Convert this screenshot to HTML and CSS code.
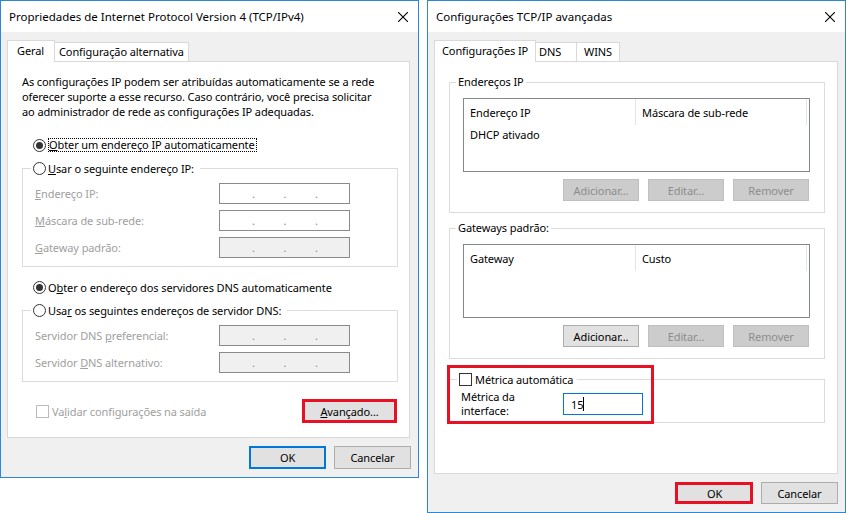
FILE: index.html
```html
<!DOCTYPE html>
<html lang="pt-BR">
<head>
    <meta charset="UTF-8">
    <meta name="viewport" content="width=device-width, initial-scale=1.0">
    <title>Propriedades TCP/IPv4</title>
    <link rel="stylesheet" href="styles.css">
</head>
<body>
<div class="desk">

    <!-- Janela: Propriedades IPv4 -->
    <div class="dialog dialog-ipv4">
        <div class="titlebar">
            <span class="title">Propriedades de Internet Protocol Version 4 (TCP/IPv4)</span>
            <svg class="close" width="10" height="10" viewBox="0 0 10 10"><path d="M0 0L10 10M10 0L0 10" stroke="#000" stroke-width="1.1"/></svg>
        </div>
        <div class="dialog-body">
            <div class="tabs">
                <div class="tab active tab-geral">Geral</div>
                <div class="tab tab-alt">Configuração alternativa</div>
            </div>
            <div class="panel panel-ipv4">
                <p class="desc">As configurações IP podem ser atribuídas automaticamente se a rede<br>oferecer suporte a esse recurso. Caso contrário, você precisa solicitar<br>ao administrador de rede as configurações IP adequadas.</p>

                <div class="option option-first"><span class="radio checked"></span><span class="focus"><u>O</u>bter um endereço IP automaticamente</span></div>

                <fieldset class="group group-ip">
                    <legend class="option"><span class="radio"></span><span><u>U</u>sar o seguinte endereço IP:</span></legend>
                    <div class="fields">
                        <div class="field"><span class="label"><u>E</u>ndereço IP:</span><span class="ip"><i>.</i><i>.</i><i>.</i></span></div>
                        <div class="field"><span class="label"><u>M</u>áscara de sub-rede:</span><span class="ip"><i>.</i><i>.</i><i>.</i></span></div>
                        <div class="field"><span class="label"><u>G</u>ateway padrão:</span><span class="ip off"><i>.</i><i>.</i><i>.</i></span></div>
                    </div>
                </fieldset>

                <div class="option option-dns"><span class="radio checked"></span><span>O<u>b</u>ter o endereço dos servidores DNS automaticamente</span></div>

                <fieldset class="group group-ip">
                    <legend class="option"><span class="radio"></span><span>Usa<u>r</u> os seguintes endereços de servidor DNS:</span></legend>
                    <div class="fields">
                        <div class="field"><span class="label">Servidor DNS <u>p</u>referencial:</span><span class="ip off"><i>.</i><i>.</i><i>.</i></span></div>
                        <div class="field"><span class="label">Servidor <u>D</u>NS alternativo:</span><span class="ip off"><i>.</i><i>.</i><i>.</i></span></div>
                    </div>
                </fieldset>

                <div class="panel-foot">
                    <div class="check-row disabled"><span class="checkbox"></span><span>Va<u>l</u>idar configurações na saída</span></div>
                    <button class="btn btn-advanced marked"><u>A</u>vançado...</button>
                </div>
            </div>
            <div class="dialog-buttons">
                <button class="btn btn-default">OK</button>
                <button class="btn">Cancelar</button>
            </div>
        </div>
    </div>

    <!-- Janela: Configurações TCP/IP avançadas -->
    <div class="dialog dialog-advanced">
        <div class="titlebar">
            <span class="title">Configurações TCP/IP avançadas</span>
            <svg class="close" width="10" height="10" viewBox="0 0 10 10"><path d="M0 0L10 10M10 0L0 10" stroke="#000" stroke-width="1.1"/></svg>
        </div>
        <div class="dialog-body">
            <div class="tabs">
                <div class="tab active tab-ip">Configurações IP</div>
                <div class="tab tab-dns">DNS</div>
                <div class="tab tab-wins">WINS</div>
            </div>
            <div class="panel panel-advanced">
                <fieldset class="group group-list">
                    <legend>Endereços IP</legend>
                    <div class="group-body">
                        <div class="listview">
                            <div class="lv-head"><span class="col-a">Endereço IP</span><span class="col-b">Máscara de sub-rede</span></div>
                            <div class="lv-row">DHCP ativado</div>
                        </div>
                        <div class="list-buttons">
                            <button class="btn" disabled>Adicionar...</button>
                            <button class="btn" disabled>Editar...</button>
                            <button class="btn" disabled>Remover</button>
                        </div>
                    </div>
                </fieldset>

                <fieldset class="group group-list">
                    <legend>Gateways padrão:</legend>
                    <div class="group-body">
                        <div class="listview">
                            <div class="lv-head"><span class="col-a">Gateway</span><span class="col-b">Custo</span></div>
                        </div>
                        <div class="list-buttons">
                            <button class="btn">Adicionar...</button>
                            <button class="btn" disabled>Editar...</button>
                            <button class="btn" disabled>Remover</button>
                        </div>
                    </div>
                </fieldset>

                <fieldset class="group group-metric">
                    <legend class="check-row"><span class="checkbox"></span><span>Métrica automática</span></legend>
                    <div class="metric-body">
                        <span class="metric-label">Métrica da<br>interface:</span>
                        <span class="metric-input">15<span class="caret"></span></span>
                    </div>
                </fieldset>

                <!-- destaque vermelho sobre a métrica -->
                <div class="highlight highlight-metric"></div>
            </div>
            <div class="dialog-buttons">
                <button class="btn btn-ok marked">OK</button>
                <button class="btn">Cancelar</button>
            </div>
        </div>
    </div>

</div>
</body>
</html>
```

FILE: styles.css
```css
/* Global */
body {
    margin: 0;
    background-color: #fff;
    font-family: 'Noto Sans', 'Open Sans', sans-serif;
    font-size: 11px;
    letter-spacing: -0.1px;
    color: #000;
}

.desk {
    display: flex;
    align-items: flex-start;
    gap: 8px;
}

/* Dialog window */
.dialog {
    width: 419px;
    box-sizing: border-box;
    border: 1px solid #2b88d8;
    background-color: #f0f0f0;
}

.dialog-ipv4 {
    height: 478px;
}

.dialog-advanced {
    height: 513px;
}

.titlebar {
    height: 31px;
    background-color: #fff;
    display: flex;
    align-items: center;
    justify-content: space-between;
    padding: 0 10px 0 8px;
}

.title {
    font-size: 11.5px;
    letter-spacing: 0;
}

.dialog-body {
    padding: 8px 8px 0 6px;
}

.dialog-advanced .dialog-body {
    padding-right: 7px;
}

/* Tabs */
.tabs {
    display: flex;
    align-items: flex-end;
    height: 21px;
}

.tab {
    box-sizing: border-box;
    height: 19px;
    line-height: 17px;
    border: 1px solid #d9d9d9;
    border-bottom: none;
    background-color: #fff;
    white-space: nowrap;
}

.tab + .tab {
    border-left: none;
}

.tab.active {
    position: relative;
    z-index: 1;
    height: 22px;
    line-height: 19px;
    margin-bottom: -1px;
}

.tab-geral { width: 48px; padding-left: 9px; }
.tab-alt { width: 134px; padding-left: 4px; }
.tab-ip { width: 102px; padding-left: 7px; }
.tab-dns { width: 41px; padding-left: 3px; }
.tab-wins { width: 43px; padding-left: 7px; }

/* Tab panel */
.panel {
    box-sizing: border-box;
    border: 1px solid #d9d9d9;
    background-color: #fff;
}

.panel-ipv4 {
    height: 377px;
    padding: 0 11px 0 14px;
}

.panel-advanced {
    position: relative;
    height: 413px;
    overflow: hidden;
}

.desc {
    margin: 12px 0 0 0;
    line-height: 15px;
    white-space: nowrap;
}

/* Radio options */
.option {
    display: flex;
    align-items: center;
    gap: 2px;
    height: 20px;
    white-space: nowrap;
}

.option-first {
    margin: 16px 0 0 11px;
}

.option-dns {
    margin: 10px 0 0 11px;
}

.radio {
    box-sizing: border-box;
    width: 13px;
    height: 13px;
    border: 1px solid #333;
    border-radius: 50%;
    background-color: #fff;
    display: flex;
    align-items: center;
    justify-content: center;
}

.radio.checked::after {
    content: '';
    width: 7px;
    height: 7px;
    border-radius: 50%;
    background-color: #333;
}

.focus {
    line-height: 12px;
    border: 1px dotted #000;
    padding: 0 1px 0 0;
}

/* Group boxes */
.group {
    margin: 0;
    padding: 0;
    min-inline-size: 0;
    border: 1px solid #dcdcdc;
}

.group-ip {
    margin-top: 3px;
}

.group-ip legend {
    margin-left: 8px;
    padding: 0 6px 0 2px;
}

.fields {
    padding: 5px 0 8px 12px;
}

.field {
    display: flex;
    align-items: center;
    height: 21px;
    margin-top: 6px;
}

.field:first-child {
    margin-top: 0;
}

.field .label {
    width: 184px;
    color: #a0a0a0;
}

.ip {
    box-sizing: border-box;
    width: 131px;
    height: 21px;
    border: 1px solid #8a8a8a;
    background-color: #fff;
    display: flex;
    padding-left: 32px;
    line-height: 19px;
    color: #8a8a8a;
}

.ip.off {
    background-color: #f0f0f0;
}

.ip i {
    font-style: normal;
    width: 31.5px;
}

/* Checkbox */
.check-row {
    display: flex;
    align-items: center;
    gap: 3px;
    white-space: nowrap;
}

.checkbox {
    box-sizing: border-box;
    width: 13px;
    height: 13px;
    border: 1px solid #333;
    background-color: #fff;
}

.check-row.disabled {
    color: #a0a0a0;
}

.check-row.disabled .checkbox {
    border-color: #bcbcbc;
}

.panel-foot {
    display: flex;
    align-items: center;
    justify-content: space-between;
    margin: 17px 1px 0 14px;
}

/* Buttons */
.btn {
    box-sizing: border-box;
    width: 77px;
    height: 23px;
    padding: 0;
    border: 1px solid #adadad;
    background-color: #e1e1e1;
    font-family: inherit;
    font-size: 11px;
    letter-spacing: -0.1px;
    color: #000;
}

.btn:disabled {
    background-color: #cccccc;
    border-color: #bfbfbf;
    color: #8c8c8c;
}

.btn-default {
    border-color: #0078d7;
    box-shadow: inset 0 0 0 1px #0078d7;
}

.btn-advanced {
    width: 95px;
    height: 24px;
}

.marked {
    position: relative;
}

.marked::after {
    content: '';
    position: absolute;
    inset: -1px;
    border: 3px solid #e81123;
}

.btn-ok::after {
    inset: -1px -1px -1px -2px;
}

.dialog-buttons {
    display: flex;
    justify-content: flex-end;
    gap: 8px;
    margin: 8px -1px 0 0;
}

.dialog-advanced .dialog-buttons {
    margin: 8px 0 0 0;
}

.dialog-advanced .dialog-buttons .btn {
    height: 22px;
}

/* Advanced panel groups */
.group-list,
.group-metric {
    margin: 7px 12px 0 14px;
}

.group-list:first-child {
    margin-top: 12px;
}

.group-metric {
    margin-top: 12px;
}

.group-list legend {
    margin-left: 6px;
    padding: 0 2px;
    line-height: 16px;
}

.group-body {
    padding: 8px 14px 11px 13px;
}

.listview {
    box-sizing: border-box;
    width: 347px;
    height: 74px;
    border: 1px solid #828790;
    background-color: #fff;
}

.lv-head {
    display: flex;
    height: 26px;
}

.lv-head span {
    box-sizing: border-box;
    display: flex;
    align-items: center;
    padding-left: 6px;
    border-right: 1px solid #e5e5e5;
}

.col-a { width: 172px; }
.col-b { width: 171px; }

.lv-row {
    height: 20px;
    line-height: 20px;
    padding-left: 6px;
}

.list-buttons {
    display: flex;
    justify-content: flex-end;
    gap: 9px;
    margin-top: 7px;
    padding-right: 1px;
}

.list-buttons .btn {
    width: 76px;
    height: 22px;
}

/* Metric group */
.group-metric legend {
    margin-left: 7px;
    padding: 0 4px 0 2px;
    height: 16px;
}

.metric-body {
    display: flex;
    align-items: center;
    padding: 3px 0 4px 11px;
}

.metric-label {
    width: 102px;
    line-height: 14px;
}

.metric-input {
    box-sizing: border-box;
    width: 80px;
    height: 22px;
    border: 1px solid #0078d7;
    background-color: #fff;
    padding-left: 7px;
    display: flex;
    align-items: center;
}

.caret {
    width: 1px;
    height: 14px;
    background-color: #000;
}

.highlight {
    position: absolute;
    box-sizing: border-box;
    border: 3px solid #e81123;
}

.highlight-metric {
    left: 12px;
    top: 303px;
    width: 207px;
    height: 59px;
}
```
